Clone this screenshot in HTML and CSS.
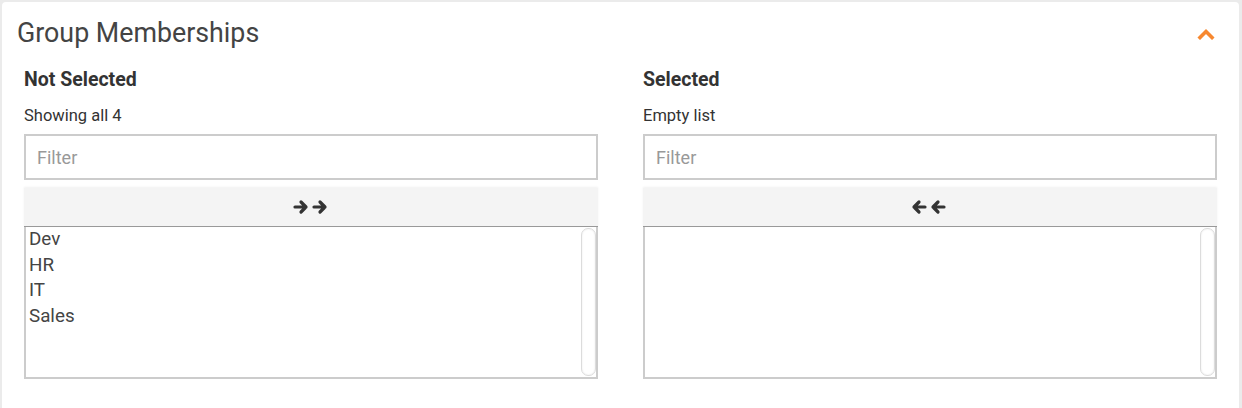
FILE: index.html
```html
<!DOCTYPE html>
<html>
<head>
<meta charset="utf-8">
<link rel="stylesheet" href="styles.css">
</head>
<body>
<div class="card">
  <div class="card-head">
    <h2 class="title">Group Memberships</h2>
    <svg class="chev" width="18" height="12" viewBox="0 0 18 12"><polyline points="3,9.5 9,3.5 15,9.5" fill="none" stroke="#f7882f" stroke-width="3.6" stroke-linecap="square"/></svg>
  </div>
  <div class="cols">
    <div class="col">
      <div class="col-title">Not Selected</div>
      <div class="info">Showing all 4</div>
      <div class="filter">Filter</div>
      <div class="movebar">
        <svg width="36" height="16" viewBox="0 0 36 16"><g fill="none" stroke="#333" stroke-width="3.2" stroke-linecap="round" stroke-linejoin="round"><path d="M2 8H13M8 3L13 8L8 13"/><path d="M21 8H32M27 3L32 8L27 13"/></g></svg>
      </div>
      <div class="listbox">
        <div class="items">
          <div class="item">Dev</div>
          <div class="item">HR</div>
          <div class="item">IT</div>
          <div class="item">Sales</div>
        </div>
        <div class="track"></div>
      </div>
    </div>
    <div class="col">
      <div class="col-title">Selected</div>
      <div class="info">Empty list</div>
      <div class="filter">Filter</div>
      <div class="movebar">
        <svg class="left" width="36" height="16" viewBox="0 0 36 16"><g fill="none" stroke="#333" stroke-width="3.2" stroke-linecap="round" stroke-linejoin="round"><path d="M34 8H23M28 3L23 8L28 13"/><path d="M15 8H4M9 3L4 8L9 13"/></g></svg>
      </div>
      <div class="listbox">
        <div class="items"></div>
        <div class="track"></div>
      </div>
    </div>
  </div>
</div>
</body>
</html>
```
FILE: styles.css
```css
html, body { margin: 0; padding: 0; }
body {
  background: #ebebeb;
  font-family: Roboto, "Liberation Sans", sans-serif;
  color: #333;
  width: 1242px;
  height: 408px;
  overflow: hidden;
}
.card {
  margin: 2px 3px 0 2px;
  background: #fff;
  border-radius: 4px;
  height: 430px;
}
.card-head {
  display: flex;
  align-items: center;
  justify-content: space-between;
  padding: 14px 24px 0 15px;
  height: 33px;
}
.title {
  margin: 0;
  font-size: 26.8px;
  font-weight: 400;
  color: #444;
  line-height: 32px;
}
.chev { margin-top: 3px; }
.cols {
  display: flex;
  gap: 45px;
  padding: 20px 0 0 22px;
}
.col {
  width: 574px;
  display: flex;
  flex-direction: column;
}
.col-title {
  font-size: 19.5px;
  font-weight: 700;
  color: #333;
  line-height: 22px;
}
.info {
  font-size: 16.5px;
  color: #333;
  line-height: 20px;
  margin-top: 15px;
}
.filter {
  margin-top: 8px;
  height: 42px;
  border: 2px solid #ccc;
  box-sizing: content-box;
  font-size: 18px;
  color: #999;
  line-height: 43px;
  padding-left: 11px;
}
.movebar {
  margin-top: 8px;
  height: 38px;
  background: #f4f4f4;
  border-bottom: 1px solid #999;
  box-shadow: 0 -1px 2px rgba(0,0,0,0.06);
  display: flex;
  align-items: center;
  justify-content: center;
}
.movebar .left { margin-left: -5px; }
.listbox {
  height: 150px;
  border: 2px solid #ccc;
  border-top: none;
  display: flex;
}
.items {
  flex: 1;
  padding: 0 0 0 3px;
}
.item {
  font-size: 18.8px;
  color: #444;
  line-height: 25.5px;
}
.track {
  width: 13px;
  margin: 1px 0 1px 0;
  border-radius: 7px;
  border: 1px solid #dcdcdc;
  box-shadow: inset 0 0 2px rgba(0,0,0,0.1);
  background: #fff;
}
```
